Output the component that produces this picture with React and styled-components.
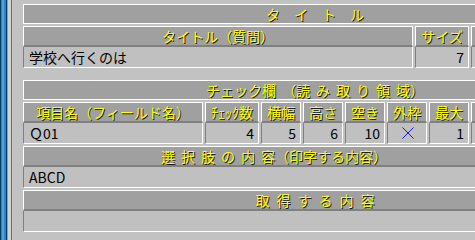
import React from "react";
import styled, { createGlobalStyle } from "styled-components";

const GlobalStyle = createGlobalStyle`
  html, body { margin: 0; padding: 0; background: #c0c0c0; overflow: hidden; }
  * { box-sizing: border-box; }
`;

const Window = styled.div`
  display: flex;
  width: 475px;
  height: 240px;
  overflow: hidden;
  background: #c2c2c2;
`;

const Rail = styled.div`
  flex: none;
  width: 12px;
  height: 100%;
  background: linear-gradient(
    to right,
    #0d3b63 0 1px,
    #2a86c2 1px 2px,
    #4aa6dc 2px 4px,
    #2a86c2 4px 6px,
    #0d3b63 6px 7px,
    #9a9a9a 7px 8px,
    #d2d2d2 8px 11px,
    #6c6c6c 11px 12px
  );
`;

const Content = styled.div`
  flex: none;
  width: 595px;
  padding: 4px 0 0 11px;
  display: flex;
  flex-direction: column;
`;

const headFont = `
  font-family: "Noto Sans CJK JP", "Noto Sans", sans-serif;
  font-size: 14px;
  line-height: 1;
  color: #ffff00;
  text-shadow: 1px 1px 0 #1a1a1a;
  white-space: pre;
`;

const Bar = styled.div`
  height: 20px;
  border: 1px solid #ffffff;
  background: #a0a0a0;
  display: flex;
  align-items: center;
  justify-content: center;
  margin-bottom: ${(p) => p.$after}px;
  ${headFont}
`;

const Spread = styled.span`
  display: inline-flex;
  gap: ${(p) => p.$gap}px;
`;

const Row = styled.div`
  display: flex;
  gap: 2px;
  margin-bottom: ${(p) => p.$after}px;
`;

const Column = styled.div`
  display: flex;
  flex-direction: column;
  flex: ${(p) => (p.$w ? `0 0 ${p.$w}px` : "1 1 auto")};
`;

const Head = styled.div`
  height: 21px;
  border-top: 1px solid #ffffff;
  border-left: 1px solid #ffffff;
  border-right: 1px solid #ffffff;
  border-bottom: 2px solid #808080;
  background: #a0a0a0;
  display: flex;
  align-items: center;
  justify-content: center;
  padding-right: ${(p) => p.$shift || 0}px;
  ${headFont}
`;

const Data = styled.div`
  height: 21px;
  border-left: 1px solid #808080;
  border-right: 1px solid #ffffff;
  border-bottom: 1px solid #ffffff;
  background: #c0c0c0;
  display: flex;
  align-items: center;
  justify-content: ${(p) =>
    p.$align === "right" ? "flex-end" : p.$align === "center" ? "center" : "flex-start"};
  padding: 0 4px 0 5px;
  font-family: "Noto Sans CJK JP", "Noto Sans", sans-serif;
  font-size: 14px;
  line-height: 1;
  color: #000000;
  white-space: pre;
`;

const Cross = () => (
  <svg width="12" height="12" viewBox="0 0 12 12">
    <path d="M0.5 0.5 L11.5 11.5 M11.5 0.5 L0.5 11.5" stroke="#1c1ce0" strokeWidth="1" fill="none" />
  </svg>
);

const Spaced = ({ parts, gap }) => (
  <Spread $gap={gap}>
    {parts.map((p, i) => (
      <span key={i}>{p}</span>
    ))}
  </Spread>
);

const Field = ({ w, head, value, align, shift }) => (
  <Column $w={w}>
    <Head $shift={shift}>{head}</Head>
    <Data $align={align}>{value}</Data>
  </Column>
);

const checkCols = [
  { w: 54, head: "ﾁｪｯｸ数", value: "4" },
  { w: 40, head: "横幅", value: "5" },
  { w: 40, head: "高さ", value: "6" },
  { w: 40, head: "空き", value: "10" },
  { w: 40, head: "外枠", value: <Cross />, align: "center" },
  { w: 40, head: "最大", value: "1" },
];

export default function App() {
  return (
    <>
      <GlobalStyle />
      <Window>
        <Rail />
        <Content>
          <Bar $after={2}>
            <Spaced parts={["タ", "イ", "ト", "ル"]} gap={14} />
          </Bar>
          <Row $after={12}>
            <Field w={390} head="タイトル（質問）" value="学校へ行くのは" />
            <Field w={54} head="サイズ" value="7" align="right" />
            <Field head="" value="" />
          </Row>
          <Bar $after={2}>
            <Spaced parts={["チェック欄", "（読", "み", "取", "り", "領", "域）"]} gap={6} />
          </Bar>
          <Row $after={2}>
            <Field w={180} head="項目名（フィールド名）" value="Ｑ01" />
            {checkCols.map((c) => (
              <Field key={c.head} w={c.w} head={c.head} value={c.value} align={c.align || "right"} />
            ))}
            <Field head="" value="" />
          </Row>
          <Row $after={2}>
            <Field
              head={<Spaced parts={["選", "択", "肢", "の", "内", "容（印字する内容）"]} gap={6} />}
              value="ABCD"
              shift={82}
            />
          </Row>
          <Row $after={0}>
            <Field head={<Spaced parts={["取", "得", "す", "る", "内", "容"]} gap={7} />} value="" />
          </Row>
        </Content>
      </Window>
    </>
  );
}
